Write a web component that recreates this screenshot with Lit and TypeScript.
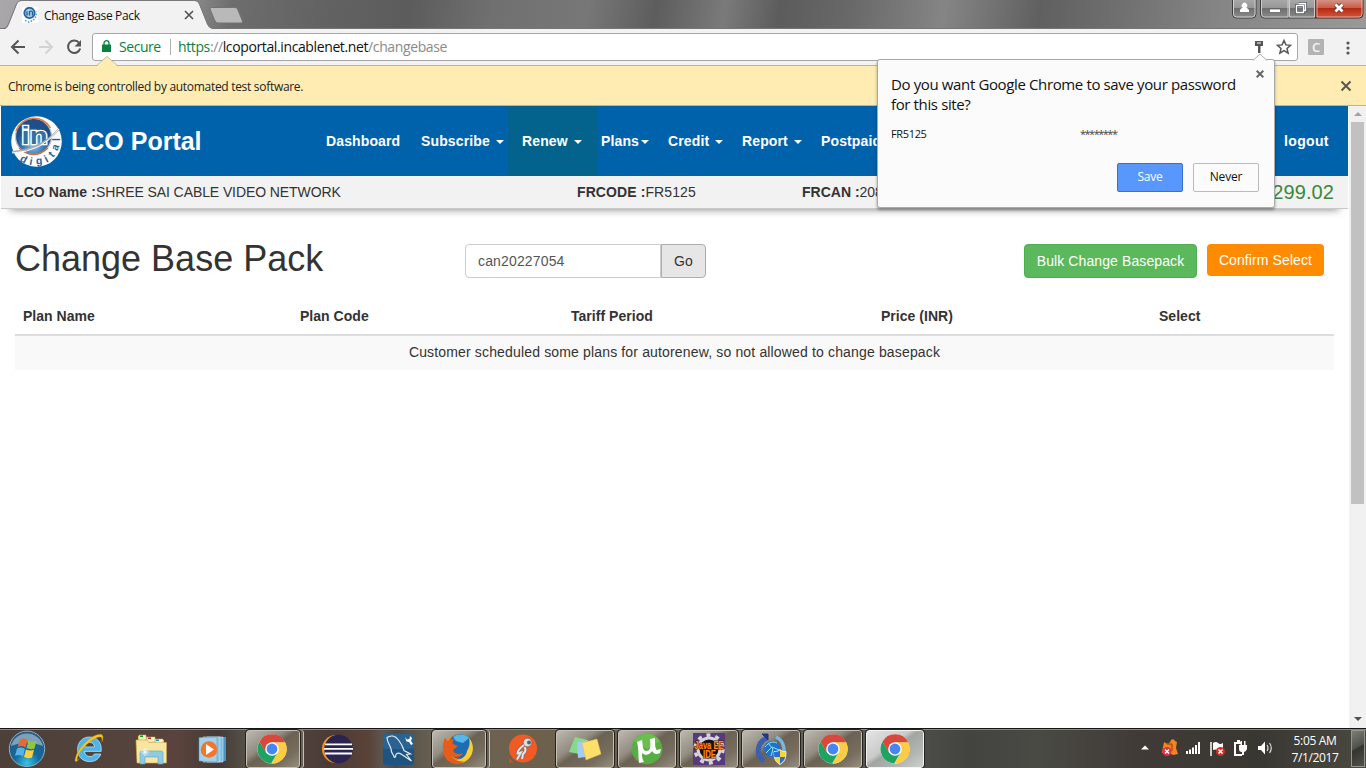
import { LitElement, html, css, svg } from "lit";
import { customElement } from "lit/decorators.js";

const chrome = svg`
  <circle cx="16" cy="16" r="14.6" fill="#fff"/>
  <path d="M16 9.3 H29.1 A14.6 14.6 0 0 1 15.5 30.6 L22 19 Z" fill="#fccd42"/>
  <path d="M3.4 8.7 A14.6 14.6 0 0 0 15.2 30.6 L21.6 19.5 L10.3 19.5 Z" fill="#1da362"/>
  <path d="M3.4 8.7 A14.6 14.6 0 0 1 29.1 9.3 H16 L9.8 19.3 Z" fill="#d9483b"/>
  <circle cx="16" cy="16" r="6.8" fill="#fff"/><circle cx="16" cy="16" r="5.4" fill="#4586f3"/>`;

const ie = svg`
  <path d="M16.500 4C9.500 4 4.600 9.300 4.600 16.400 4.600 24 9.800 28.600 16.800 28.600c5.200 0 9.400-2.600 11-7.600h-6.400c-.9 1.700-2.400 2.500-4.400 2.500-3.200 0-5.200-2-5.400-5.100h16.600C29.100 9.500 24.100 4 16.500 4zm-4.800 9.900c.6-2.900 2.300-4.500 5-4.500s4.500 1.700 4.900 4.500z" fill="#4db5ec" stroke="#c9f0ff" stroke-width=".7"/>
  <path d="M7 25C2 31 1 29 3 23 7 12 20 1 27.500 1.200c3.600.2 2.600 5.300 1.300 8 .6-4.600-.2-5.700-3-5.100C19 5.500 8 15.500 4.800 23.500c-1.300 4-.3 4.500 2.200 1.500z" fill="#f7c61c" stroke="#b98500" stroke-width=".3"/>`;

const explorer = svg`
  <path d="M3 3h8l1 2h7l1 2h9v18H3z" fill="#e9cf75"/>
  <path d="M4 2h7v5H4zM12 4h8v5h-8zM20 6h8v6h-8z" fill="#fff6cf" stroke="#c8a647" stroke-width=".5"/>
  <path d="M5 2.500h3v1.500H5z" fill="#0a0"/><path d="M13 4.500h3v1.500h-3z" fill="#c22"/><path d="M21 6.500h3v1.500h-3z" fill="#19c"/>
  <path d="M1 7h11l2 2.500h17.500V30H2z" fill="#f8e6a0" stroke="#cfad50" stroke-width=".6"/>
  <path d="M5 31V20q0-2 2-2h19q2 0 2 2v11h-5v-7H10v7z" fill="#8fcbe3" stroke="#5aa6c9" stroke-width=".6"/>
  <path d="M10 15v8M6 19h8M7.500 16.500l5 5M12.500 16.500l-5 5" stroke="#fff" stroke-width=".8"/>`;

const player = svg`
  <path d="M12 4h17v24H12z" fill="#4c93c4"/><path d="M10 4h16v25H10z" fill="#7bbbe0" stroke="#d3ecf8" stroke-width=".6"/>
  <path d="M6 4h17v25H6z" fill="#8ac5e6" stroke="#cfeaf8" stroke-width=".6"/><path d="M2 4.500 20 4v25L2 28z" fill="#a1d2ec" stroke="#4b90bd" stroke-width=".5"/>
  <circle cx="12" cy="16.500" r="8.300" fill="#f2762b"/><path d="M9 11v11l8-5.500z" fill="#fff"/>`;

const eclipse = svg`
  <circle cx="15" cy="16" r="14" fill="#f7941e"/><circle cx="17.500" cy="16" r="14.300" fill="#2b2350"/>
  <path d="M4 11.300h27M3 15.900h29M4 20.500h27" stroke="#fff" stroke-width="1.800"/>`;

const mysql = svg`
  <rect x="0" y="1" width="31" height="31" rx="3" fill="#1f5480"/><rect x="0" y="1" width="31" height="15" rx="3" fill="#2a6291"/>
  <path d="M4 4.500c3.500-2.500 8-2 11.500 2.500 3.500 4.500 4.500 7 5.500 10.500l6.500 3.500-4 .5 5 6.500-9-6c-3-2.500-5.500-2.500-6.500-.5-.5 3-1.500 4-2.200 1.500-1-2.500-3-3.500-2.600-6.500-1-4.500-4-6.500-4.200-12z" fill="none" stroke="#dfecf5" stroke-width="1.200"/>
  <path d="M22 4l2 2.500 2.500-.5L27 3l2 2-1 3 2 3-2 1-2-3-2.500-.5z" fill="#fff"/>`;

const firefox = svg`
  <circle cx="16" cy="16" r="14.500" fill="#ef8a1c"/><circle cx="18" cy="13.500" r="12.300" fill="#1f6cb5"/>
  <path d="M11 4c5-4 13-3 16 1l-6 5-7-2z" fill="#53b8ea"/>
  <path d="M27 5c5 5 5 14 1 19-5 7-15 8-21 3 9 2 17-2 18-9 3-5 3-9 2-13z" fill="#f9cf35"/>
  <path d="M3 5c1 1 2 3 3 3 2-2 5-2 7-2-2 1-3 3-2 5l5 2-5 4c1 4 6 5 10 3-2 5-9 5-12 2 2 5 8 7 13 6-7 6-17 2-20-6C0 16 1 9 3 5z" fill="#e65c18"/>`;

const postman = svg`
  <circle cx="16" cy="15.500" r="14" fill="#f15a24"/><path d="M2 25l5 4.500H2z" fill="#e34715"/>
  <circle cx="20.500" cy="9.500" r="4.300" fill="#ddd" stroke="#555" stroke-width=".6"/><circle cx="22" cy="9.500" r="2" fill="#55616b"/>
  <path d="M17 12c-3 2-7 6-6.500 8.500l3.500-1-4 7M17.500 14c2 3 1 5-1.500 7l-1 5" stroke="#8c6a5c" stroke-width="3.400" fill="none"/>
  <path d="M17 12c-3 2-7 6-6.500 8.500l3.500-1-4 7M17.500 14c2 3 1 5-1.500 7l-1 5" stroke="#e3e6e8" stroke-width="2" fill="none"/>`;

const notes = svg`
  <path d="M6 4l13 3-4 15-15-3z" fill="#86d88c"/><path d="M8 9l15-1 1 15-15 2z" fill="#9fcdf7"/><path d="M13 10l15-4 4 15-15 6z" fill="#ffe06b" stroke="#e7bf42" stroke-width=".5"/>`;

const torrent = svg`
  <circle cx="16" cy="16" r="15.300" fill="#58ad43"/><path d="M3 8a15.300 15.300 0 0 1 26 0L16 16z" fill="#6abf50"/>
  <path d="M6 9l5-2c1 4 0 10 4 11 4 0 5-3 4-12l5-1c0 6 0 11 2 12l4-1-1 4c-4 2-6 1-8-2-2 4-7 5-10 2 0 3 0 6 2 9l-5 1C7 23 8 16 6 9z" fill="#fff"/>`;

const javaee = svg`
  <rect width="32" height="32" fill="#57397e"/><circle cx="16" cy="16" r="11" fill="#15101c" stroke="#d5d5d5" stroke-width="3"/>
  <circle cx="16" cy="16" r="14" fill="none" stroke="#d5d5d5" stroke-width="3.400" stroke-dasharray="4 5"/>
  <text x="1.500" y="15.500" textLength="29" lengthAdjust="spacingAndGlyphs" class="jee">Java EE</text><text x="10" y="24.500" textLength="13" lengthAdjust="spacingAndGlyphs" class="jee">IDE</text>`;

const sync = svg`
  <path d="M12 5C2 9 0 22 9 28" stroke="#3c5fae" stroke-width="5" fill="none"/><path d="M7 1h6v6z" fill="#23397f" stroke="#23397f"/>
  <path d="M21 4c9 4 10 16 5 22" stroke="#78b7df" stroke-width="3.500" fill="none"/>
  <circle cx="17" cy="16" r="8" fill="#1b72cf"/><path d="M10 14c4-5 8-6 12-4M11 20l6-6 7 3M13 10l5 6-2 7" stroke="#8fe0ff" fill="none"/>
  <path d="M25 16.500c-2 2-4 2-6 2 0 7 1 10 6 13 5-3 6-6 6-13-2 0-4 0-6-2z" fill="#f7d33c" stroke="#e8eef4" stroke-width=".9"/>
  <path d="M25 17.500v6.500h-5.600c-.3-2-.4-3-.4-5 2 0 4 0 6-1.500zM25 24h5.300c-1 3-2 4.800-5.300 6.800z" fill="#2a6fd0"/>`;

const APPS = [
  { icon: ie, kind: "plain" },
  { icon: explorer, kind: "plain" },
  { icon: player, kind: "plain" },
  { icon: chrome, kind: "stack" },
  { icon: eclipse, kind: "plain" },
  { icon: mysql, kind: "plain" },
  { icon: firefox, kind: "stack" },
  { icon: postman, kind: "plain" },
  { icon: notes, kind: "open" },
  { icon: torrent, kind: "open" },
  { icon: javaee, kind: "open" },
  { icon: sync, kind: "open" },
  { icon: chrome, kind: "open" },
  { icon: chrome, kind: "open active" },
];

/* Letters that run round the lower right rim of the logo: glyph, centre, turn in degrees. */
const RIM: [string, number, number, number][] = [
  ["d", 12.5, 43.5, 28],
  ["i", 20, 45.8, 10],
  ["g", 28, 45.2, -6],
  ["i", 35.3, 43.3, -28],
  ["t", 40.7, 38.6, -48],
  ["a", 44.6, 31.5, -68],
  ["l", 46, 23.5, -90],
];

@customElement("browser-frame")
class BrowserFrame extends LitElement {
  static styles = css`
    :host { display: block; font-family: "Open Sans", "Noto Sans", sans-serif; color: #222; }
    svg { display: block; flex: none; }
    .strip { height: 28px; border-bottom: 1px solid #77757a; display: flex; align-items: flex-start; position: relative;
      background: linear-gradient(100deg, #a9a7a9 0, #8d8c8d 14%, #6d6d6d 17%, #626262 24%, #5c5c5c 30%, #707070 36%, #777 43%, #5d5d5d 48%, #7a7a7a 53%, #5c5c5c 57%, #686868 62%, #858585 69%, #606060 76%, #707070 82%, #858585 89%, #999 100%); }
    .tab { width: 213px; height: 29px; position: relative; flex: none; }
    .shape { position: absolute; left: 0; top: 0; }
    .label { position: relative; display: flex; align-items: center; height: 29px; padding-left: 22px; }
    .fav { margin-right: 6px; }
    .title { font-size: 12px; width: 98px; letter-spacing: -.35px; white-space: nowrap; color: #111; padding-top: 1px; }
    .close { margin-left: 42px; }
    .newtab { margin: 7px 0 0 -4px; }
    .caption { margin-left: auto; margin-right: 1px; }
    .tools { height: 36px; background: #f2f2f2; border-bottom: 1px solid #b5b3ae; display: flex; align-items: center; }
    .navs { display: flex; gap: 12px; padding-left: 10px; width: 82px; }
    .omni { width: 1204px; height: 26px; border: 1px solid #a6a6a6; border-radius: 3px; background: #fff; display: flex; align-items: center; }
    .lock { margin-left: 9px; margin-top: -2px; }
    .secure { color: #0b8043; font-size: 14px; line-height: 16px; margin-left: 8px; width: 50px; letter-spacing: -.45px; }
    .url { border-left: 1px solid #b0b0b0; margin-left: 1px; padding-left: 7px; line-height: 16px; font-size: 14px; letter-spacing: -.38px; color: #8a8a8a; white-space: nowrap; }
    .green { color: #0b8043; } .host { color: #111; }
    .right { margin-left: auto; display: flex; gap: 12px; align-items: center; padding-right: 5px; }
    .ext { width: 16px; height: 16px; margin-left: 10px; background: #b3b3b3; color: #f5f5f5; font: 600 13px/16px "Open Sans"; text-align: center; border-radius: 1px; }
    .menu { margin-left: 22px; margin-top: 1px; }
    .info { height: 39px; border-bottom: 1px solid #bcb497; background: #ffecb3; display: flex; align-items: center; padding: 0 14px 0 8px; justify-content: space-between; position: relative; font-size: 12px; letter-spacing: -.3px; }
    .msg { padding-top: 2px; }
    .pointer { position: absolute; left: 96px; top: -10px; }
  `;
  render() {
    return html`
      <div class="strip">
        <div class="tab">
          <svg class="shape" width="213" height="29" viewBox="0 0 213 29"><path d="M0 29H5C7 28.500 8 27 9 24L17 4Q18 1 21 1H195Q198 1 199 4L207 24Q209 28.500 213 29Z" fill="#f2f2f2"/><path d="M0 28.500H4Q7 28 8.500 24L16.500 4Q18 .5 21 .5H195Q198 .5 199.500 4L207.500 24Q209 28 213 28.500" fill="none" stroke="#7a787b"/><path d="M6 29H210" stroke="#f2f2f2" stroke-width="2"/></svg>
          <div class="label">
            <svg class="fav" width="16" height="16" viewBox="0 0 16 16"><rect width="16" height="16" fill="#fff"/><circle cx="7.500" cy="6" r="5.200" fill="#a8cbe5" stroke="#24649d" stroke-width="1.800"/><path d="M5 4.500v4M7.500 8.500v-4q3-1 3 1v3" stroke="#235c96" stroke-width="1.300" fill="none"/><path d="M3 13.500 7 15l4-1.500 3-4 .500-5" fill="none" stroke="#58a7d8" stroke-width="1.700" stroke-dasharray="1.500 1.500"/></svg>
            <span class="title">Change Base Pack</span>
            <svg class="close" width="10" height="10" viewBox="0 0 10 10"><path d="M1 1l8 8M9 1l-8 8" stroke="#555" stroke-width="1.700"/></svg>
          </div>
        </div>
        <svg class="newtab" width="35" height="17" viewBox="0 0 35 17"><path d="M2.500.500H26q2 0 2.500 1.500L33.500 14q.5 2-1.500 2H9q-2 0-3-2L1 2Q.5.500 2.500.5z" fill="#b9b9b9" stroke="#737373"/></svg>
        <svg class="caption" width="133" height="19" viewBox="0 0 133 19">
          <defs><linearGradient id="red" x2="0" y2="1"><stop offset="0" stop-color="#d4988d"/><stop offset=".45" stop-color="#c9604b"/><stop offset=".5" stop-color="#b52a12"/><stop offset="1" stop-color="#d5583d"/></linearGradient><linearGradient id="gr" x2="0" y2="1"><stop offset="0" stop-color="#aaa"/><stop offset=".45" stop-color="#979797"/><stop offset=".5" stop-color="#6e6e6e"/><stop offset="1" stop-color="#8c8c8c"/></linearGradient></defs>
          <path d="M.5-1V14q0 4 4 4H20q4 0 4-4V-1z" fill="url(#gr)" stroke="#3e3e3e"/><path d="M1.500 0V14q0 3 3 3H20q3 0 3-3V0" fill="none" stroke="#d0d0d0"/>
          <path d="M28.500-1V14q0 4 4 4H84V-1z" fill="url(#gr)" stroke="#3e3e3e"/><path d="M84-1V18h43q4 0 4-4V-1z" fill="url(#red)" stroke="#4a2019"/>
          <path d="M29.500 0V14q0 3 3 3H56V0M57.500 0V17H82.500V0" fill="none" stroke="#ccc"/><path d="M85 0V17h42q3 0 3-3V0" fill="none" stroke="#e6aa9f"/>
          <path d="M8 12h9v-2q-1-2-3-2.300a2.700 2.700 0 1 0-3 0Q8.500 8 8 10z" fill="#fff"/>
          <path d="M37.500 9h11v3.500h-11z" fill="#fff" stroke="#555" stroke-width=".7"/>
          <path d="M66.500 3.500h7v7h-2M64.500 5.500h7v7h-7z" fill="none" stroke="#505460" stroke-width="3"/><path d="M66.500 3.500h7v7h-2M64.500 5.500h7v7h-7z" fill="none" stroke="#fff" stroke-width="1.400"/>
          <path d="M103.500 4.500l7 7M110.500 4.500l-7 7" stroke="#5c342e" stroke-width="4.400"/><path d="M103.500 4.500l7 7M110.500 4.500l-7 7" stroke="#fff" stroke-width="2.800"/>
        </svg>
      </div>
      <div class="tools">
        <div class="navs">
          <svg width="16" height="16" viewBox="0 0 16 16"><path d="M15 8H2.500M8.500 1.500 2 8l6.500 6.500" fill="none" stroke="#555" stroke-width="2"/></svg>
          <svg width="16" height="16" viewBox="0 0 16 16"><path d="M1 8h12.500M7.500 1.500 14 8l-6.500 6.500" fill="none" stroke="#d3d3d3" stroke-width="2"/></svg>
          <svg width="16" height="16" viewBox="0 0 16 16"><path d="M13.200 4A6.200 6.200 0 1 0 14.200 9.500" fill="none" stroke="#555" stroke-width="2"/><path d="M15 1v6.500H8.500z" fill="#555"/></svg>
        </div>
        <div class="omni">
          <svg class="lock" width="9" height="12" viewBox="0 0 9 12"><path d="M0 4.500h9V12H0z" fill="#0b8043"/><path d="M2 5V3.200a2.500 2.500 0 0 1 5 0V5" fill="none" stroke="#0b8043" stroke-width="1.300"/></svg>
          <span class="secure">Secure</span>
          <span class="url"><span class="green">https</span>://<span class="host">lcoportal.incablenet.net</span>/changebase</span>
          <div class="right">
            <svg width="10" height="14" viewBox="0 0 10 14"><path d="M1 1h8v5H6.500v7H4V6H1z" fill="#555"/><path d="M3 3h4" stroke="#fff"/></svg>
            <svg width="16" height="16" viewBox="0 0 16 16"><path d="M8 1.500l1.900 4.400 4.700.4-3.600 3.100 1.100 4.700L8 11.600l-4.100 2.500L5 9.400 1.400 6.300l4.700-.4z" fill="none" stroke="#555" stroke-width="1.500"/></svg>
          </div>
        </div>
        <div class="ext">C</div>
        <svg class="menu" width="4" height="14" viewBox="0 0 4 14"><circle cx="2" cy="2" r="1.600" fill="#555"/><circle cx="2" cy="7" r="1.600" fill="#555"/><circle cx="2" cy="12" r="1.600" fill="#555"/></svg>
      </div>
      <div class="info">
        <svg class="pointer" width="22" height="11" viewBox="0 0 22 11"><path d="M0 11 11 0l11 11z" fill="#ffecb3"/><path d="M.5 9.500 11 .5l10.500 9" fill="none" stroke="#b8b09a" stroke-width=".8"/></svg>
        <span class="msg">Chrome is being controlled by automated test software.</span>
        <svg width="12" height="12" viewBox="0 0 12 12"><path d="M1.500 1.500l9 9M10.500 1.500l-9 9" stroke="#5b574b" stroke-width="2"/></svg>
      </div>`;
  }
}

@customElement("portal-page")
class PortalPage extends LitElement {
  static styles = css`
    :host { display: block; width: 1347px; padding-left: 1px; background: #fff; font: 14px/20px "Liberation Sans", Arial, sans-serif; color: #333; }
    .nav { height: 70px; background: #0062ab; display: flex; align-items: center; color: #fff; font-weight: bold; }
    .brand { display: flex; align-items: center; width: 311px; }
    .logo { margin: 0 9px 0 10px; width: 51px; height: 51px; flex: none; overflow: visible; }
    .name { font-size: 25px; line-height: 30px; white-space: nowrap; }
    .links { display: grid; grid-template-columns: 95px 101px 89px 57px 74px 79px 463px auto; height: 70px; align-items: stretch; letter-spacing: .13px; }
    .link { display: flex; align-items: center; padding-left: 14px; white-space: nowrap; }
    .link:last-child { letter-spacing: .35px; }
    .current { background: #03638c; }
    .plans { padding-left: 4px; }
    .caret { border: 4px solid transparent; border-top-color: #fff; border-bottom: 0; margin-left: 6px; margin-top: 1px; }
    .plans .caret { margin-left: 2px; }
    .account { height: 32px; border-bottom: 1px solid #c9c9c9; background: #f2f2f2; display: grid; grid-template-columns: 562px 225px 1fr auto; align-items: center; padding: 0 14px; box-shadow: 0 9px 9px -9px #777; white-space: nowrap; }
    .owner { letter-spacing: -.09px; }
    .owner b { letter-spacing: .08px; }
    .code { letter-spacing: .1px; }
    .balance { color: #3b883d; font-size: 20px; letter-spacing: .1px; }
    .heading { display: flex; align-items: flex-start; padding: 35px 24px 0 14px; height: 53px; }
    h1 { font-size: 36px; line-height: 40px; font-weight: normal; margin: -5px 0 0; width: 450px; white-space: nowrap; }
    .search { display: flex; width: 559px; letter-spacing: .15px; }
    .field { width: 182px; height: 32px; line-height: 32px; border: 1px solid #ccc; border-radius: 4px 0 0 4px; padding-left: 12px; color: #555; }
    .go { height: 32px; line-height: 32px; padding: 0 12px; width: 19px; border: 1px solid #adadad; background: #e6e6e6; border-radius: 0 4px 4px 0; }
    .bulk { height: 32px; line-height: 32px; width: 171px; text-align: center; border: 1px solid #4cae4c; border-radius: 4px; background: #5cb85c; color: #fff; letter-spacing: .1px; }
    .confirm { height: 32px; line-height: 32px; width: 117px; text-align: center; border-radius: 4px; background: #ff8c00; color: #fff; margin-left: 10px; letter-spacing: .1px; }
    .head { margin: 0 14px; padding: 9px 8px 8px; border-bottom: 2px solid #ddd; display: grid; grid-template-columns: 277px 271px 310px 278px 1fr; font-weight: bold; letter-spacing: .03px; }
    .row { margin: 0 14px; background: #f9f9f9; height: 34px; line-height: 33px; text-align: center; letter-spacing: .155px; }
    .rim { font: bold 10.500px "Liberation Sans"; fill: #24629c; text-anchor: middle; }
    .in { font: bold 24px "Liberation Sans"; fill: #376d9f; stroke: #fff; stroke-width: 2.500px; paint-order: stroke; }
  `;
  render() {
    return html`
      <div class="nav">
        <div class="brand">
          <svg class="logo" viewBox="0 0 51 51">
            <defs><radialGradient id="globe" cx=".5" cy=".75"><stop offset="0" stop-color="#8fc4e7"/><stop offset=".55" stop-color="#3f7db6"/><stop offset="1" stop-color="#1e4f88"/></radialGradient></defs>
            <circle cx="25.500" cy="25.500" r="25.300" fill="#fff"/>
            <circle cx="22.500" cy="20.500" r="18" fill="url(#globe)" stroke="#b9c5cd" stroke-width="1.200"/>
            <path d="M5 15A19 19 0 0 1 39.500 12" fill="none" stroke="#e47a43" stroke-width="1.500"/><path d="M8 32Q23 45 37 32" fill="none" stroke="#d2693b" stroke-width="1.300"/>
            <text x="10.500" y="27.500" class="in" textLength="26" lengthAdjust="spacingAndGlyphs">in</text>
            <path d="M1 36Q30 34 48 13" fill="none" stroke="#a5aeb4" stroke-width="2"/><path d="M1 37Q31 36 48 13" fill="none" stroke="#fff" stroke-width="1"/>
            ${RIM.map(([ch, x, y, turn]) => svg`<text class="rim" transform="translate(${x} ${y}) rotate(${turn})" y="3">${ch}</text>`)}
          </svg>
          <span class="name">LCO Portal</span>
        </div>
        <div class="links">
          <div class="link">Dashboard</div>
          <div class="link">Subscribe<span class="caret"></span></div>
          <div class="link current">Renew<span class="caret"></span></div>
          <div class="link plans">Plans<span class="caret"></span></div>
          <div class="link">Credit<span class="caret"></span></div>
          <div class="link">Report<span class="caret"></span></div>
          <div class="link">Postpaid</div>
          <div class="link">logout</div>
        </div>
      </div>
      <div class="account">
        <span class="owner"><b>LCO Name :</b>SHREE SAI CABLE VIDEO NETWORK</span>
        <span class="code"><b>FRCODE :</b>FR5125</span>
        <span><b>FRCAN :</b>208</span>
        <span class="balance">299.02</span>
      </div>
      <div class="heading">
        <h1>Change Base Pack</h1>
        <div class="search"><div class="field">can20227054</div><div class="go">Go</div></div>
        <div class="bulk">Bulk Change Basepack</div>
        <div class="confirm">Confirm Select</div>
      </div>
      <div class="head"><span>Plan Name</span><span>Plan Code</span><span>Tariff Period</span><span>Price (INR)</span><span>Select</span></div>
      <div class="row">Customer scheduled some plans for autorenew, so not allowed to change basepack</div>`;
  }
}

@customElement("password-bubble")
class PasswordBubble extends LitElement {
  static styles = css`
    :host { display: block; width: 396px; height: 147px; border: 1px solid #aaa; border-radius: 3px; background: #fbfbfb; box-shadow: 0 2px 3px rgba(0,0,0,.35); font-family: "Open Sans", "Noto Sans", sans-serif; color: #111; }
    .tip { position: absolute; left: 374px; top: -7px; }
    .x { position: absolute; left: 378px; top: 10px; }
    .ask { padding: 14px 0 0 13px; font-size: 15px; line-height: 20px; letter-spacing: -.37px; white-space: nowrap; }
    .cred { display: flex; padding: 12px 0 0 13px; font-size: 11px; line-height: 16px; }
    .user { width: 189px; letter-spacing: -.35px; }
    .stars { letter-spacing: -1.500px; color: #444; }
    .actions { display: flex; justify-content: flex-end; gap: 10px; padding: 21px 15px 0 0; font-size: 12px; }
    .btn { width: 64px; height: 27px; line-height: 26px; text-align: center; border: 1px solid #bbb; border-radius: 2px; letter-spacing: -.2px; }
    .save { background: #5897fb; border-color: #3a6fd0; color: #fff; }
  `;
  render() {
    return html`
      <svg class="tip" width="16" height="8" viewBox="0 0 16 8"><path d="M0 8 8 1l8 7z" fill="#fbfbfb"/><path d="M1 7.500 8 1l7 6.500" fill="none" stroke="#aaa"/></svg>
      <svg class="x" width="8" height="8" viewBox="0 0 8 8"><path d="M.7.700l6.600 6.600M7.300.700.700 7.300" stroke="#666" stroke-width="2"/></svg>
      <div class="ask">Do you want Google Chrome to save your password<br>for this site?</div>
      <div class="cred"><span class="user">FR5125</span><span class="stars">********</span></div>
      <div class="actions"><div class="btn save">Save</div><div class="btn">Never</div></div>`;
  }
}

@customElement("task-bar")
class TaskBar extends LitElement {
  static styles = css`
    :host { display: flex; height: 38px; border-top: 1px solid #161616; box-shadow: inset 0 1px #8b8985; align-items: stretch;
      background: linear-gradient(90deg, #4c4039 0, #54433c 9%, #5a433c 13%, #443a36 16%, #565148 18%, #4b3b37 24%, #5a4238 27%, #5d5650 28%, #4d4b48 29%, #6c6352 32%, #6d604b 43%, #6b6454 55%, #5c5b54 62%, #4b4b47 68%, #434440 71%, #494a44 76%, #413b38 83%, #393732 92%, #494941 100%); font-family: "Open Sans", "Noto Sans", sans-serif; color: #fff; padding-top: 1px; }
    svg { display: block; overflow: visible; }
    .orb { width: 58px; padding-left: 8px; box-sizing: border-box; }
    .apps { display: flex; }
    .slot { width: 62px; display: flex; }
    .btn { width: 58px; margin: 0 2px; height: 38px; box-sizing: border-box; display: flex; align-items: center; justify-content: center; border-radius: 3px; padding-bottom: 1px; }
    .open, .stack { border: 1px solid #c4c1b9; outline: 1px solid #24221f; outline-offset: 0; background: linear-gradient(145deg, #bdb9b1 0, #928c81 36%, #6c6253 48%, #766d5f 75%, #958d7e 100%); }
    .stack { width: 54px; margin-right: 0; padding-right: 2px; box-shadow: 3px 0 0 #6a6255, 4px 0 0 #c3c0ba; }
    .active { background: linear-gradient(145deg, #e4e4e4 0, #c9cac9 40%, #a3a5a3 48%, #b4b6b4 75%, #d0d1cf 100%); border-color: #f3f3f3; }
    .jee { font: bold 10px "Liberation Sans"; fill: #ff8b1f; stroke: #4a1c00; stroke-width: 1.200px; paint-order: stroke; }
    .tray { margin-left: auto; display: flex; align-items: center; }
    .icons { margin-top: -2px; }
    .clock { width: 72px; margin-left: 7px; text-align: center; font-size: 12px; line-height: 17px; letter-spacing: -.35px; }
    .desk { width: 12px; border: 1px solid #93958f; margin: 0 1px 1px 0; background: linear-gradient(150deg, #7c7f79, #50524b 45%, #33342e 50%, #50514a); }
  `;
  render() {
    return html`
      <div class="orb"><svg width="38" height="38" viewBox="0 0 38 38">
        <defs><radialGradient id="o" cx=".5" cy=".9" r=".8"><stop offset="0" stop-color="#34c6ec"/><stop offset=".45" stop-color="#14689b"/><stop offset="1" stop-color="#285a82"/></radialGradient></defs>
        <circle cx="19" cy="18.800" r="17.700" fill="url(#o)" stroke="#8fb0c1"/><path d="M3 16a16.500 16.500 0 0 1 32 0Q19 9 3 16z" fill="#b9cfda" opacity=".6"/>
        <path d="M12 9.500q4-2 7.500.5L17.500 17.500q-4-2.500-8-.5z" fill="#e96a31"/><path d="M20.500 10.500q3.500 2 8 .3L26.500 18.500q-4 1.500-8-.5z" fill="#8ec644"/>
        <path d="M9 18.500q4-2 8 .5L15 26.500q-3.500-2.500-8-.5z" fill="#57b2e8"/><path d="M18 19.500q4 2 8 .3L24 27.500q-4 1.500-8-.5z" fill="#fbcf3f"/></svg></div>
      <div class="apps">${APPS.map(a => html`<div class="slot"><div class="btn ${a.kind}"><svg width="32" height="32" viewBox="0 0 32 32">${a.icon}</svg></div></div>`)}</div>
      <div class="tray">
        <svg class="icons" width="136" height="20" viewBox="0 0 136 20">
          <path d="M5 11.500 9 7.500l4 4z" fill="#fff"/>
          <path d="M28 4q5 4 7-2 3-2 4 1l2 1-1 6 2 6-5 1-5-3-6 1 1-6z" fill="#f5841f"/><path d="M31 6h5v7" stroke="#8a3c06" fill="none"/><circle cx="31" cy="13.500" r="4.500" fill="#e03043"/><path d="M29 11.500l4 4M33 11.500l-4 4" stroke="#fff" stroke-width="1.400"/>
          <path d="M50 13h2v3h-2zM53 11.500h2V16h-2zM56 9.500h2V16h-2zM59 7h2v9h-2zM62 4h2v12h-2z" fill="#fff"/>
          <path d="M75 4v14" stroke="#fff" stroke-width="1.500"/><path d="M77 5q3-2 5 0t5 0v7q-2 1-5 0t-5 0z" fill="#fff"/><circle cx="84.500" cy="13.500" r="4.500" fill="#d92a20"/><path d="M82.500 11.500l4 4M86.500 11.500l-4 4" stroke="#fff" stroke-width="1.500"/>
          <path d="M105 5h-6v12h7M101 3h3" stroke="#fff" stroke-width="2" fill="none"/><path d="M103 7h8v4q-1 3-3 3v3h-2v-3q-3 0-3-3zM104.500 3h1.500v4h-1.500zM108 3h1.500v4H108z" fill="#fff"/>
          <path d="M122 8h3l4-4.500v13l-4-4.500h-3z" fill="#fff"/><path d="M131 7q2 3 0 6M133.500 5q3.500 5 0 10" stroke="#ddd" stroke-width="1.200" fill="none"/>
        </svg>
        <div class="clock">5:05 AM<br>7/1/2017</div>
      </div>
      <div class="desk"></div>`;
  }
}

@customElement("app-root")
class AppRoot extends LitElement {
  static styles = css`
    :host { display: flex; flex-direction: column; width: 1366px; height: 768px; overflow: hidden; position: relative; background: #fff; }
    .view { display: flex; height: 622px; flex: none; }
    .scroll { width: 17px; margin-left: 1px; background: #f1f1f1; display: flex; flex-direction: column; align-items: center; }
    .up, .down { width: 8px; height: 16px; }
    .thumb { width: 13px; height: 382px; background: #c1c1c1; }
    .down { margin-top: auto; }
    .bubble { position: absolute; left: 877px; top: 59px; }
  `;
  render() {
    return html`
      <browser-frame></browser-frame>
      <div class="view">
        <portal-page></portal-page>
        <div class="scroll">
          <svg class="up" viewBox="0 0 8 16"><path d="M0 10 4 6l4 4z" fill="#a3a3a3"/></svg>
          <div class="thumb"></div>
          <svg class="down" viewBox="0 0 8 16"><path d="M0 5h8l-4 4z" fill="#505050"/></svg>
        </div>
      </div>
      <task-bar></task-bar>
      <password-bubble class="bubble"></password-bubble>`;
  }
}
